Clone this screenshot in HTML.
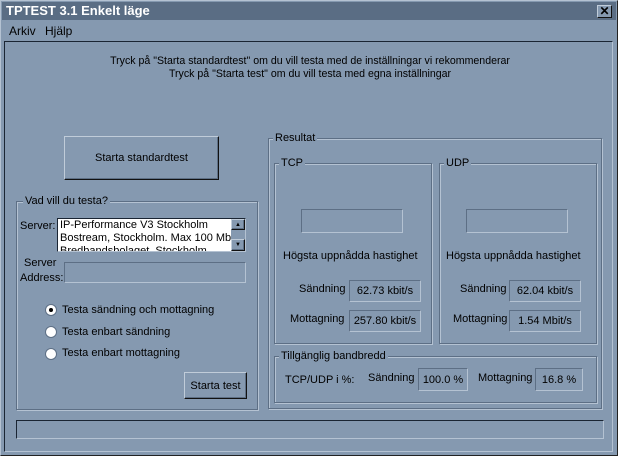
<!DOCTYPE html><html><head><meta charset="utf-8"><style>
*{box-sizing:border-box;margin:0;padding:0}
body{width:618px;height:456px;background:#8599b0;font-family:"Liberation Sans",sans-serif;font-size:11px;color:#000;position:relative;overflow:hidden}
.a{position:absolute;white-space:nowrap}
.grp{position:absolute;border:1px solid #5d6f85;box-shadow:1px 1px 0 #b4c2d2, inset 1px 1px 0 #b4c2d2}
.gl{position:absolute;background:#8599b0;padding:0 2px;top:-8px;left:6px;line-height:14px}
.sunk{position:absolute;border:1px solid;border-color:#5d6f85 #b4c2d2 #b4c2d2 #5d6f85}
.btn{position:absolute;border:1px solid;border-color:#c0ccd9 #111 #111 #c0ccd9;box-shadow:inset -1px -1px 0 #5d6f85;display:flex;align-items:center;justify-content:center}
.val{display:flex;align-items:center;justify-content:center}
.rad{position:absolute;width:12px;height:12px;border-radius:50%;background:#fff;border:1px solid #5d6f85}
</style></head><body>
<div class="a" style="left:0;top:0;width:618px;height:456px;border:1px solid;border-color:#b4c2d2 #222 #222 #b4c2d2"></div>
<div class="a" style="left:2px;top:2px;width:614px;height:18px;background:#5a6d84"></div>
<div class="a" style="left:6px;top:3px;color:#fff;font-weight:bold;font-size:13px;line-height:16px">TPTEST 3.1 Enkelt läge</div>
<div class="a" style="left:597px;top:5px;width:15px;height:13px;background:#8599b0;border:1px solid;border-color:#c0ccd9 #111 #111 #c0ccd9;font-size:12px;line-height:10px;text-align:center;font-weight:bold">✕</div>
<div class="a" style="left:9px;top:24px;font-size:12px">Arkiv</div>
<div class="a" style="left:45px;top:24px;font-size:12px">Hjälp</div>
<div class="a" style="left:4px;top:41px;width:609px;height:411px;border:1px solid;border-color:#1a2533 #b4c2d2 #b4c2d2 #1a2533"></div>
<div class="a" style="left:10px;top:55px;width:600px;text-align:center;line-height:13px;font-size:10.6px">Tryck på "Starta standardtest" om du vill testa med de inställningar vi rekommenderar<br>Tryck på "Starta test" om du vill testa med egna inställningar</div>
<div class="btn" style="left:64px;top:136px;width:155px;height:44px">Starta standardtest</div>

<div class="grp" style="left:16px;top:201px;width:242px;height:209px"><div class="gl">Vad vill du testa?</div></div>
<div class="a" style="left:20px;top:220px">Server:</div>
<div class="a" style="left:57px;top:218px;width:189px;height:34px;background:#fff;border:1px solid;border-color:#1a2533 #b4c2d2 #b4c2d2 #1a2533;overflow:hidden;line-height:13px;font-size:11px;padding-left:2px">IP-Performance V3 Stockholm<br>Bostream, Stockholm. Max 100 Mbit.<br>Bredbandsbolaget, Stockholm</div>
<div class="a" style="left:231px;top:219px;width:14px;height:32px;background:#8599b0"></div>
<div class="btn" style="left:231px;top:219px;width:14px;height:11px;font-size:6px">▲</div>
<div class="btn" style="left:231px;top:239px;width:14px;height:12px;font-size:6px">▼</div>
<div class="a" style="left:24px;top:257px">Server</div>
<div class="a" style="left:20px;top:272px">Address:</div>
<div class="sunk" style="left:64px;top:262px;width:182px;height:21px"></div>
<div class="rad" style="left:45px;top:304px"><div style="position:absolute;left:3px;top:3px;width:4px;height:4px;background:#000;border-radius:50%"></div></div>
<div class="a" style="left:62px;top:304px;font-size:11px">Testa sändning och mottagning</div>
<div class="rad" style="left:45px;top:326px"></div>
<div class="a" style="left:62px;top:326px;font-size:11px">Testa enbart sändning</div>
<div class="rad" style="left:45px;top:348px"></div>
<div class="a" style="left:62px;top:347px;font-size:11px">Testa enbart mottagning</div>
<div class="btn" style="left:184px;top:372px;width:63px;height:27px">Starta test</div>

<div class="grp" style="left:268px;top:138px;width:334px;height:271px"><div class="gl" style="left:4px">Resultat</div></div>
<div class="grp" style="left:274px;top:163px;width:158px;height:181px"><div class="gl" style="left:4px">TCP</div></div>
<div class="grp" style="left:439px;top:163px;width:158px;height:181px"><div class="gl" style="left:4px">UDP</div></div>
<div class="sunk" style="left:301px;top:209px;width:102px;height:24px"></div>
<div class="sunk" style="left:466px;top:209px;width:102px;height:24px"></div>
<div class="a" style="left:283px;top:250px;font-size:11px">Högsta uppnådda hastighet</div>
<div class="a" style="left:446px;top:250px;font-size:11px">Högsta uppnådda hastighet</div>
<div class="a" style="left:299px;top:283px">Sändning</div>
<div class="sunk val" style="left:349px;top:280px;width:72px;height:22px">62.73 kbit/s</div>
<div class="a" style="left:290px;top:313px">Mottagning</div>
<div class="sunk val" style="left:349px;top:310px;width:72px;height:22px">257.80 kbit/s</div>
<div class="a" style="left:460px;top:283px">Sändning</div>
<div class="sunk val" style="left:509px;top:280px;width:72px;height:22px">62.04 kbit/s</div>
<div class="a" style="left:453px;top:313px">Mottagning</div>
<div class="sunk val" style="left:509px;top:310px;width:72px;height:22px">1.54 Mbit/s</div>
<div class="grp" style="left:274px;top:356px;width:323px;height:47px"><div class="gl" style="left:4px">Tillgänglig bandbredd</div></div>
<div class="a" style="left:285px;top:374px;font-size:11px">TCP/UDP i %:</div>
<div class="a" style="left:368px;top:372px">Sändning</div>
<div class="sunk val" style="left:418px;top:368px;width:50px;height:23px">100.0 %</div>
<div class="a" style="left:478px;top:372px">Mottagning</div>
<div class="sunk val" style="left:535px;top:368px;width:48px;height:23px">16.8 %</div>

<div class="a" style="left:16px;top:420px;width:588px;height:19px;border:1px solid;border-color:#1a2533 #b4c2d2 #b4c2d2 #1a2533"></div>
</body></html>
